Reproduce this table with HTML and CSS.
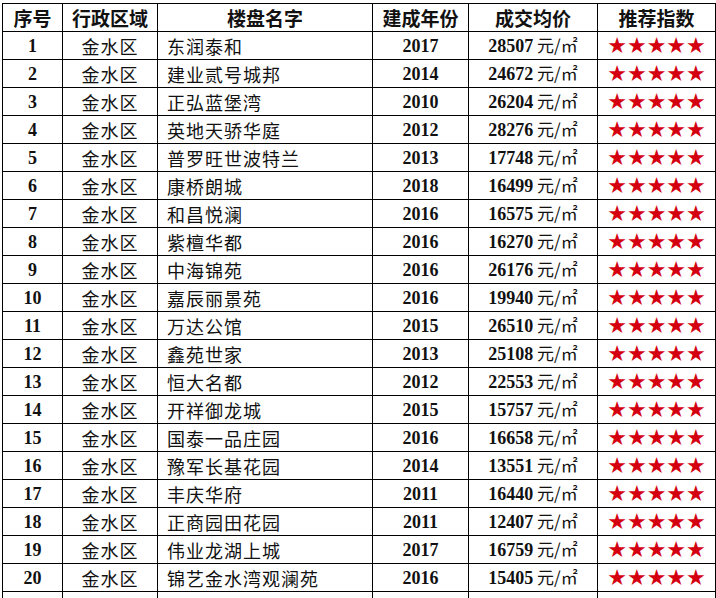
FILE: index.html
```html
<!DOCTYPE html>
<html lang="zh-CN">
<head>
<meta charset="utf-8">
<title>金水区楼盘推荐</title>
<link rel="stylesheet" href="styles.css">
</head>
<body>
<table class="grid">
  <colgroup>
    <col class="c-no"><col class="c-area"><col class="c-name"><col class="c-year"><col class="c-price"><col class="c-rate">
  </colgroup>
  <thead>
    <tr><th>序号</th><th>行政区域</th><th>楼盘名字</th><th>建成年份</th><th>成交均价</th><th>推荐指数</th></tr>
  </thead>
  <tbody>
    <tr><td class="num">1</td><td class="cn">金水区</td><td class="name">东润泰和</td><td class="num">2017</td><td class="price">28507<span class="unit"> 元/㎡</span></td><td class="stars">★★★★★</td></tr>
    <tr><td class="num">2</td><td class="cn">金水区</td><td class="name">建业贰号城邦</td><td class="num">2014</td><td class="price">24672<span class="unit"> 元/㎡</span></td><td class="stars">★★★★★</td></tr>
    <tr><td class="num">3</td><td class="cn">金水区</td><td class="name">正弘蓝堡湾</td><td class="num">2010</td><td class="price">26204<span class="unit"> 元/㎡</span></td><td class="stars">★★★★★</td></tr>
    <tr><td class="num">4</td><td class="cn">金水区</td><td class="name">英地天骄华庭</td><td class="num">2012</td><td class="price">28276<span class="unit"> 元/㎡</span></td><td class="stars">★★★★★</td></tr>
    <tr><td class="num">5</td><td class="cn">金水区</td><td class="name">普罗旺世波特兰</td><td class="num">2013</td><td class="price">17748<span class="unit"> 元/㎡</span></td><td class="stars">★★★★★</td></tr>
    <tr><td class="num">6</td><td class="cn">金水区</td><td class="name">康桥朗城</td><td class="num">2018</td><td class="price">16499<span class="unit"> 元/㎡</span></td><td class="stars">★★★★★</td></tr>
    <tr><td class="num">7</td><td class="cn">金水区</td><td class="name">和昌悦澜</td><td class="num">2016</td><td class="price">16575<span class="unit"> 元/㎡</span></td><td class="stars">★★★★★</td></tr>
    <tr><td class="num">8</td><td class="cn">金水区</td><td class="name">紫檀华都</td><td class="num">2016</td><td class="price">16270<span class="unit"> 元/㎡</span></td><td class="stars">★★★★★</td></tr>
    <tr><td class="num">9</td><td class="cn">金水区</td><td class="name">中海锦苑</td><td class="num">2016</td><td class="price">26176<span class="unit"> 元/㎡</span></td><td class="stars">★★★★★</td></tr>
    <tr><td class="num">10</td><td class="cn">金水区</td><td class="name">嘉辰丽景苑</td><td class="num">2016</td><td class="price">19940<span class="unit"> 元/㎡</span></td><td class="stars">★★★★★</td></tr>
    <tr><td class="num">11</td><td class="cn">金水区</td><td class="name">万达公馆</td><td class="num">2015</td><td class="price">26510<span class="unit"> 元/㎡</span></td><td class="stars">★★★★★</td></tr>
    <tr><td class="num">12</td><td class="cn">金水区</td><td class="name">鑫苑世家</td><td class="num">2013</td><td class="price">25108<span class="unit"> 元/㎡</span></td><td class="stars">★★★★★</td></tr>
    <tr><td class="num">13</td><td class="cn">金水区</td><td class="name">恒大名都</td><td class="num">2012</td><td class="price">22553<span class="unit"> 元/㎡</span></td><td class="stars">★★★★★</td></tr>
    <tr><td class="num">14</td><td class="cn">金水区</td><td class="name">开祥御龙城</td><td class="num">2015</td><td class="price">15757<span class="unit"> 元/㎡</span></td><td class="stars">★★★★★</td></tr>
    <tr><td class="num">15</td><td class="cn">金水区</td><td class="name">国泰一品庄园</td><td class="num">2016</td><td class="price">16658<span class="unit"> 元/㎡</span></td><td class="stars">★★★★★</td></tr>
    <tr><td class="num">16</td><td class="cn">金水区</td><td class="name">豫军长基花园</td><td class="num">2014</td><td class="price">13551<span class="unit"> 元/㎡</span></td><td class="stars">★★★★★</td></tr>
    <tr><td class="num">17</td><td class="cn">金水区</td><td class="name">丰庆华府</td><td class="num">2011</td><td class="price">16440<span class="unit"> 元/㎡</span></td><td class="stars">★★★★★</td></tr>
    <tr><td class="num">18</td><td class="cn">金水区</td><td class="name">正商园田花园</td><td class="num">2011</td><td class="price">12407<span class="unit"> 元/㎡</span></td><td class="stars">★★★★★</td></tr>
    <tr><td class="num">19</td><td class="cn">金水区</td><td class="name">伟业龙湖上城</td><td class="num">2017</td><td class="price">16759<span class="unit"> 元/㎡</span></td><td class="stars">★★★★★</td></tr>
    <tr><td class="num">20</td><td class="cn">金水区</td><td class="name">锦艺金水湾观澜苑</td><td class="num">2016</td><td class="price">15405<span class="unit"> 元/㎡</span></td><td class="stars">★★★★★</td></tr>
    <tr class="tail"><td></td><td></td><td></td><td></td><td></td><td></td></tr>
  </tbody>
</table>
</body>
</html>
```

FILE: styles.css
```css
html, body {
  margin: 0;
  padding: 0;
  background: #ffffff;
}

body {
  padding: 3px 0 0 2px;
  color: #111;
  font-family: "Noto Sans CJK SC", "Noto Sans", sans-serif;
}

.grid {
  border-collapse: collapse;
  table-layout: fixed;
  width: 713px;
}

.c-no { width: 60px; }
.c-area { width: 95px; }
.c-name { width: 215px; }
.c-year { width: 96px; }
.c-price { width: 129px; }
.c-rate { width: 118px; }

.grid th,
.grid td {
  border: 1px solid #000;
  height: 28px;
  padding: 0;
  line-height: 20px;
  text-align: center;
  vertical-align: middle;
  white-space: nowrap;
  overflow: hidden;
  box-sizing: border-box;
}

.grid th {
  font-family: "Noto Sans CJK SC", sans-serif;
  font-weight: 700;
  font-size: 19px;
  color: #111;
}

.num {
  font-family: "Liberation Serif", "Noto Sans CJK SC", serif;
  font-weight: 700;
  font-size: 18px;
}

.cn {
  font-size: 18px;
  letter-spacing: 1px;
}

.name {
  text-align: left !important;
  padding-left: 9px !important;
  font-size: 18px;
  letter-spacing: 1px;
}

.price {
  font-family: "Liberation Serif", serif;
  font-weight: 700;
  font-size: 18px;
}

.unit {
  font-family: "Noto Sans CJK SC", sans-serif;
  font-weight: 400;
  font-size: 17px;
  line-height: 1;
}

.stars {
  font-family: "DejaVu Sans", sans-serif;
  font-size: 22px;
  color: #d40010;
}
```
